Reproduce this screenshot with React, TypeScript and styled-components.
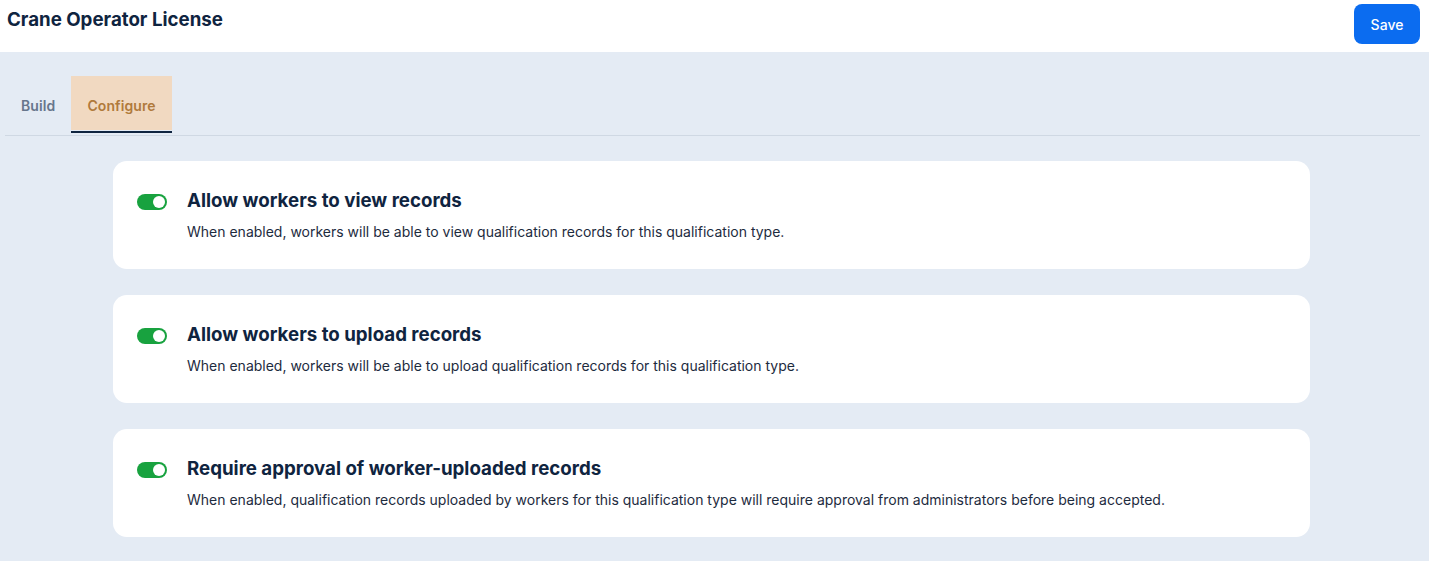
import React, { useState } from "react";
import styled, { createGlobalStyle } from "styled-components";

const GlobalStyle = createGlobalStyle`
  html, body {
    margin: 0;
    padding: 0;
    background: #e4ebf4;
    font-family: Inter, "Noto Sans", sans-serif;
    color: #0f2440;
  }
  * { box-sizing: border-box; }
`;

const Page = styled.div`
  min-height: 561px;
  background: #e4ebf4;
`;

const Header = styled.header`
  height: 52px;
  background: #ffffff;
  display: flex;
  align-items: flex-start;
  justify-content: space-between;
  padding: 4px 9px 0 7px;
`;

const Title = styled.h1`
  margin: 4px 0 0;
  font-size: 18.7px;
  line-height: 24px;
  font-weight: 700;
  color: #0f2440;
`;

const SaveButton = styled.button`
  height: 40px;
  width: 66px;
  border: none;
  border-radius: 8px;
  background: #0b6cf0;
  color: #ffffff;
  font-family: inherit;
  font-size: 14px;
  font-weight: 500;
  cursor: pointer;
`;

const Body = styled.main`
  padding: 24px 9px 0 5px;
`;

const TabList = styled.div`
  display: flex;
  padding-bottom: 2px;
  border-bottom: 1px solid #cfd8e3;
`;

const Tab = styled.button`
  display: flex;
  flex-direction: column;
  padding: 0;
  border: none;
  background: transparent;
  font-family: inherit;
  cursor: pointer;
`;

const TabFace = styled.span<{ $active?: boolean }>`
  height: 54px;
  display: flex;
  align-items: center;
  padding: 5px 16px 0;
  font-size: 14px;
  font-weight: 600;
  letter-spacing: 0.1px;
  background: ${(p) => (p.$active ? "#f1d9c1" : "transparent")};
  color: ${(p) => (p.$active ? "#b07a3c" : "#67768c")};
`;

const Indicator = styled.span<{ $active?: boolean }>`
  height: 2px;
  margin-top: 1px;
  background: ${(p) => (p.$active ? "#0f2440" : "transparent")};
`;

const Cards = styled.section`
  width: 1197px;
  margin: 25px 0 0 108px;
  display: flex;
  flex-direction: column;
  gap: 26px;
`;

const Card = styled.div`
  background: #ffffff;
  border-radius: 14px;
  padding: 26px 24px 27px;
  display: flex;
  gap: 20px;
`;

const Switch = styled.button<{ $on: boolean }>`
  flex: none;
  width: 30px;
  height: 16px;
  margin-top: 7px;
  border: none;
  border-radius: 8px;
  padding: 0;
  position: relative;
  cursor: pointer;
  background: ${(p) => (p.$on ? "#18a23f" : "#cbd5e1")};

  &::after {
    content: "";
    position: absolute;
    top: 2px;
    left: ${(p) => (p.$on ? "16px" : "2px")};
    width: 12px;
    height: 12px;
    border-radius: 50%;
    background: #ffffff;
  }
`;

const Text = styled.div`
  display: flex;
  flex-direction: column;
  gap: 7px;
`;

const CardTitle = styled.h2`
  margin: 0;
  font-size: 18.7px;
  line-height: 28px;
  font-weight: 700;
  color: #0f2440;
`;

const CardDesc = styled.p`
  margin: 0;
  font-size: 14px;
  line-height: 20px;
  color: #1d2b3e;
`;

const settings = [
  {
    title: "Allow workers to view records",
    desc: "When enabled, workers will be able to view qualification records for this qualification type.",
  },
  {
    title: "Allow workers to upload records",
    desc: "When enabled, workers will be able to upload qualification records for this qualification type.",
  },
  {
    title: "Require approval of worker-uploaded records",
    desc: "When enabled, qualification records uploaded by workers for this qualification type will require approval from administrators before being accepted.",
  },
];

export default function App() {
  const [tab, setTab] = useState("configure");
  const [on, setOn] = useState([true, true, true]);

  return (
    <Page>
      <GlobalStyle />
      <Header>
        <Title>Crane Operator License</Title>
        <SaveButton>Save</SaveButton>
      </Header>
      <Body>
        <TabList>
          {[
            ["build", "Build"],
            ["configure", "Configure"],
          ].map(([key, label]) => (
            <Tab key={key} onClick={() => setTab(key)}>
              <TabFace $active={tab === key}>{label}</TabFace>
              <Indicator $active={tab === key} />
            </Tab>
          ))}
        </TabList>
        <Cards>
          {settings.map((s, i) => (
            <Card key={s.title}>
              <Switch
                $on={on[i]}
                onClick={() => setOn(on.map((v, j) => (j === i ? !v : v)))}
              />
              <Text>
                <CardTitle>{s.title}</CardTitle>
                <CardDesc>{s.desc}</CardDesc>
              </Text>
            </Card>
          ))}
        </Cards>
      </Body>
    </Page>
  );
}
